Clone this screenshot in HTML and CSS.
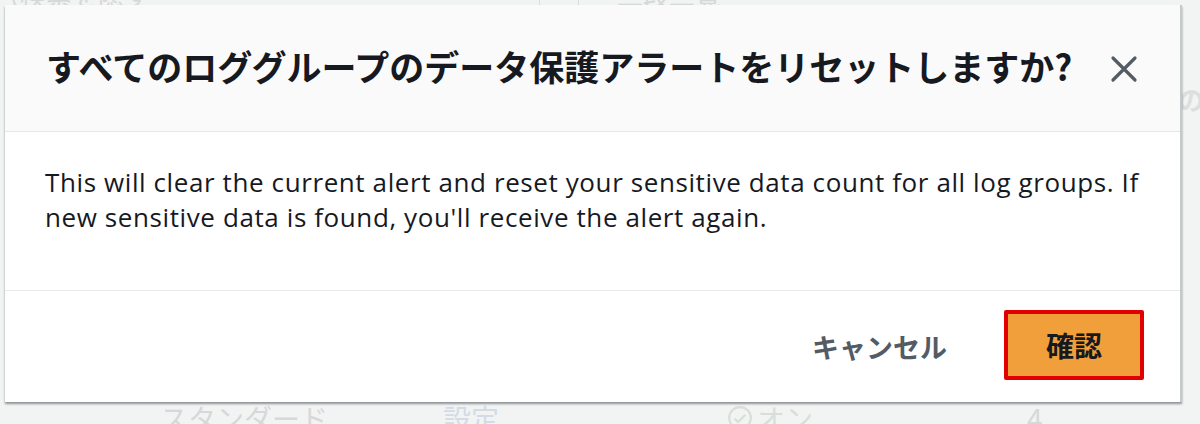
FILE: index.html
```html
<!DOCTYPE html>
<html lang="ja">

<head>
  <meta charset="UTF-8" />
  <meta name="viewport" content="width=device-width, initial-scale=1.0" />
  <link rel="stylesheet" href="styles.css">
  <title>データ保護アラートをリセット</title>
</head>

<body>
  <div class="page">
    <div class="bg-top">
      <span class="bg-search">（検索を隠す</span>
      <span class="bg-sep"></span>
      <span class="bg-sep"></span>
      <span class="bg-head">二段二覧</span>
    </div>
    <div class="bg-side">の数</div>
    <div class="bg-row">
      <span class="bg-cell cell-type">スタンダード</span>
      <span class="bg-cell cell-link">設定</span>
      <span class="bg-cell cell-status">
        <svg viewBox="0 0 24 24" width="26" height="26">
          <circle cx="12" cy="12" r="10" fill="none" stroke="currentColor" stroke-width="2" />
          <path d="M7 12.5l3.2 3.2L17 9" fill="none" stroke="currentColor" stroke-width="2" />
        </svg>オン
      </span>
      <span class="bg-cell cell-count">4</span>
    </div>
  </div>

  <div class="modal">
    <div class="modal-header">
      <h2 class="modal-title">すべてのロググループのデータ保護アラートをリセットしますか?</h2>
      <button class="close" aria-label="閉じる">
        <svg viewBox="0 0 28 28" width="28" height="28">
          <path d="M3 3L25 25M25 3L3 25" stroke="currentColor" stroke-width="3.2" stroke-linecap="round" />
        </svg>
      </button>
    </div>
    <div class="modal-body">
      <p>This will clear the current alert and reset your sensitive data count for all log groups. If new sensitive
        data is found, you'll receive the alert again.</p>
    </div>
    <div class="modal-footer">
      <button class="btn btn-link">キャンセル</button>
      <button class="btn btn-primary">確認</button>
    </div>
  </div>
</body>

</html>
```

FILE: styles.css
```css
* {
  box-sizing: border-box;
  padding: 0;
  margin: 0;
}

body {
  width: 1200px;
  height: 424px;
  overflow: hidden;
  position: relative;
  background-color: #f2f3f3;
  font-family: "Noto Sans CJK JP", "Noto Sans", sans-serif;
  color: #16191f;
}

/* faded page behind the modal */
.page {
  height: 424px;
  display: flex;
  flex-direction: column;
  color: #d5d9d9;
}

.bg-top {
  display: flex;
  align-items: flex-end;
  height: 10px;
  overflow: hidden;
  font-size: 26px;
  line-height: 30px;
}

.bg-search {
  margin-left: -6px;
  width: 545px;
}

.bg-sep {
  align-self: stretch;
  width: 1px;
  background: #dcdfdf;
  margin-right: 38px;
}

.bg-side {
  align-self: flex-end;
  margin-top: 70px;
  margin-right: -30px;
  font-size: 26px;
  font-weight: 700;
  color: #dcdfdf;
}

.bg-row {
  margin-top: auto;
  display: flex;
  align-items: center;
  height: 32px;
  margin-bottom: -10px;
  font-size: 28px;
  line-height: 32px;
}

.cell-type {
  margin-left: 160px;
  width: 283px;
}

.cell-link {
  width: 284px;
  color: #d3dbe6;
}

.cell-status {
  display: flex;
  align-items: center;
  gap: 4px;
  width: 300px;
  color: #d6e0d6;
}

/* modal */
.modal {
  position: absolute;
  left: 5px;
  top: 5px;
  width: 1177px;
  height: 397px;
  display: flex;
  flex-direction: column;
  background: #fff;
  border-right: 2px solid #c6c9c9;
  box-shadow: 0 2px 2px rgba(60, 70, 75, 0.55);
}

.modal-header {
  height: 127px;
  display: flex;
  align-items: center;
  justify-content: space-between;
  padding: 0 42px 0 41px;
  background: #fafafa;
  border-bottom: 1px solid #e5e6e6;
}

.modal-title {
  font-size: 35px;
  font-weight: 700;
  line-height: 40px;
  color: #16191f;
  margin-top: -4px;
}

.close {
  background: none;
  border: none;
  width: 28px;
  height: 28px;
  color: #545b64;
  display: flex;
  margin-top: 2px;
}

.modal-body {
  height: 159px;
  padding: 33px 0 0 40px;
  border-bottom: 1px solid #e8e9e9;
  font-family: "Open Sans", "Noto Sans CJK JP", sans-serif;
  font-size: 26px;
  letter-spacing: 0.6px;
  line-height: 35px;
  color: #16191f;
}

.modal-body p {
  width: 1112px;
}

.modal-footer {
  flex: 1;
  display: flex;
  align-items: center;
  justify-content: flex-end;
  gap: 57px;
  padding: 0 36px 0 0;
}

.btn {
  font-family: "Noto Sans CJK JP", sans-serif;
  font-weight: 700;
  border: none;
  background: none;
  cursor: pointer;
}

.btn-link {
  font-size: 27px;
  color: #545b64;
}

.btn-primary {
  width: 140px;
  height: 70px;
  font-size: 28px;
  color: #16191f;
  background: #f09f3b;
  border: 4px solid #e00000;
  border-radius: 2px;
  margin-top: -4px;
}
```
